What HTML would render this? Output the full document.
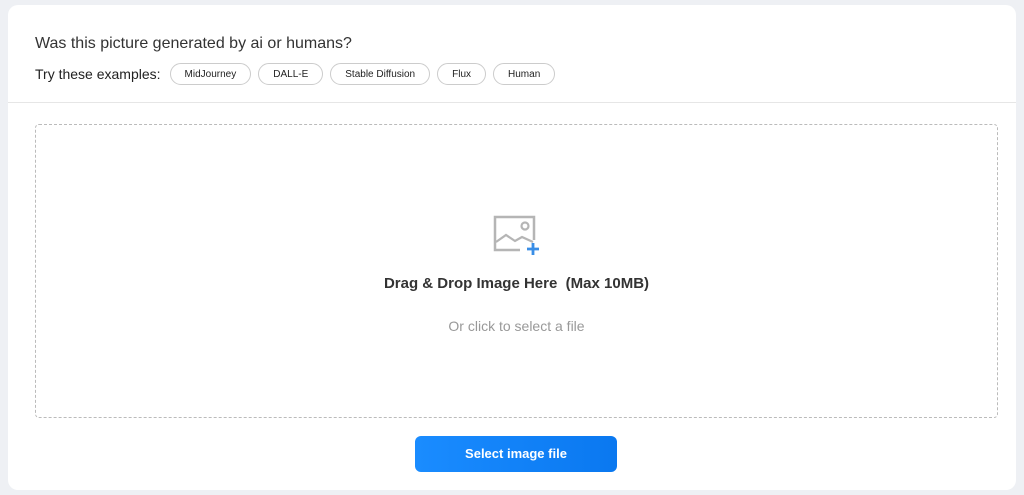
<html><head><style>
body{margin:0;background:#eef0f4;width:1024px;height:495px;overflow:hidden;font-family:"Liberation Sans",sans-serif}
.card{position:absolute;left:8px;top:5px;width:1008px;height:485px;background:#fff;border-radius:10px}
.h{position:absolute;left:27px;top:30px;font-size:16px;color:#333}
.t{position:absolute;left:27px;top:58px;font-size:14px;color:#222;display:flex;align-items:center;height:22px}
.p{border:1px solid #ccc;border-radius:12px;height:20px;display:flex;align-items:center;font-size:10px;padding:0 14px;margin-right:7px;color:#222;box-sizing:border-box;height:22px}
.div{position:absolute;left:0;right:0;top:97px;border-top:1px solid #e6e6e6}
.drop{position:absolute;left:27px;top:119px;width:961px;height:292px;border:1px dashed #bbb;border-radius:4px}
.d1{position:absolute;left:0;right:0;top:150px;text-align:center;font-size:15px;font-weight:bold;color:#333}
.d2{position:absolute;left:0;right:0;top:193px;text-align:center;font-size:14px;color:#999}
.btn{position:absolute;left:407px;top:431px;width:202px;height:36px;border-radius:6px;background:linear-gradient(90deg,#1a8cff,#0a78f0);color:#fff;font-weight:bold;font-size:13px;text-align:center;line-height:36px}
</style></head><body><div class="card">
<div class="h">Was this picture generated by ai or humans?</div>
<div class="t"><span style="margin-right:9px">Try these examples:</span><span class="p">MidJourney</span><span class="p">DALL-E</span><span class="p">Stable Diffusion</span><span class="p">Flux</span><span class="p">Human</span></div>
<div class="div"></div>
<div class="drop">
<svg style="position:absolute;left:457px;top:90px" width="48" height="40" viewBox="0 0 48 40"><path d="M27 35H2V2H41V25" fill="none" stroke="#b5b5b5" stroke-width="2.5"/><path d="M3 27l10-7 9 6 7-4 11 5" fill="none" stroke="#b5b5b5" stroke-width="2.2"/><circle cx="32" cy="11" r="3.5" fill="none" stroke="#b5b5b5" stroke-width="2.2"/><path d="M40 28v12M34 34h12" stroke="#3a8ee6" stroke-width="2.8"/></svg>
<div class="d1">Drag &amp; Drop Image Here &nbsp;(Max 10MB)</div>
<div class="d2">Or click to select a file</div>
</div>
<div class="btn">Select image file</div>
</div></body></html>
